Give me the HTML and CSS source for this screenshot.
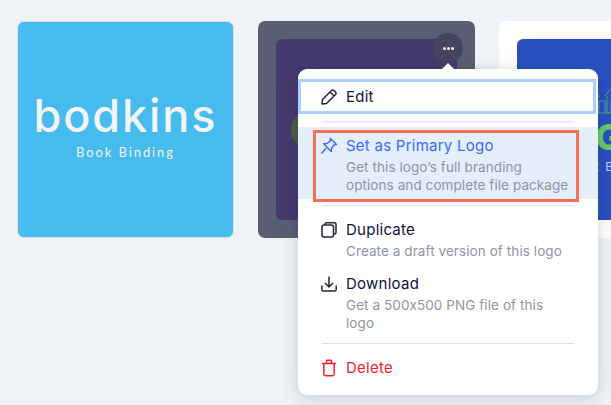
FILE: index.html
```html
<!DOCTYPE html>
<html lang="en">
<head>
<meta charset="utf-8">
<title>Logos</title>
<link rel="stylesheet" href="styles.css">
</head>
<body>
<main class="cards">
  <article class="card card-sky">
    <div class="sky-name">bodkins</div>
    <div class="sky-tag">Book Binding</div>
  </article>
  <article class="card card-slate">
    <div class="art art-purple"><span class="green-disc"></span></div>
    <button class="more" aria-label="More"><span></span><span></span><span></span></button>
  </article>
  <article class="card card-white">
    <div class="art art-blue">
      <svg class="house" width="40" height="30" viewBox="0 0 40 30" fill="none" stroke="#4fa58e" stroke-width="1"><path d="M0 14 8 8 13 13M6 10V29M12 29V17H18V29M18 12 27 1 36 12M20 12V29M24 29V18H30V29M26 5V11M30 5V11M0 29H38"/></svg>
      <span class="blue-g">G</span>
      <span class="blue-sub">t B</span>
    </div>
  </article>
</main>

<nav class="menu">
  <div class="item item-focus">
    <svg class="icon" viewBox="0 0 18 18" fill="none" stroke="#20243c" stroke-width="1.5" stroke-linejoin="round"><path d="M2 16 2.500 11.500 11.500 2.500A1.600 1.600 0 0 1 14 2.500L15.500 4A1.600 1.600 0 0 1 15.500 6.500L6.500 15.500Z M10 4 14 8"/></svg>
    <div class="title">Edit</div>
  </div>
  <hr class="rule rule-a">
  <div class="item item-primary">
    <svg class="icon icon-top" viewBox="0 0 18 18" fill="none" stroke="#3a68ff" stroke-width="1.4" stroke-linejoin="round"><path d="M1.500 16.500 6 11.500M10.500 1.500 16.500 7.500 13.800 8 11.500 11.500 11.300 14.500 3.500 6.800 7 6.500 10.200 4Z"/></svg>
    <div class="copy">
      <div class="title title-primary">Set as Primary Logo</div>
      <div class="desc">Get this logo’s full branding<br>options and complete file package</div>
    </div>
    <span class="highlight"></span>
  </div>
  <hr class="rule rule-b">
  <div class="item item-dup">
    <svg class="icon icon-top" viewBox="0 0 18 18" fill="none" stroke="#20243c" stroke-width="1.5" stroke-linejoin="round"><path d="M5 4V3.200A1.500 1.500 0 0 1 6.500 1.700H14.500A1.500 1.500 0 0 1 16 3.200V11.500A1.500 1.500 0 0 1 14.500 13H13.500"/><rect x="2" y="4" width="11.500" height="12" rx="2"/></svg>
    <div class="copy">
      <div class="title">Duplicate</div>
      <div class="desc">Create a draft version of this logo</div>
    </div>
  </div>
  <div class="item item-down">
    <svg class="icon icon-top" viewBox="0 0 18 18" fill="none" stroke="#20243c" stroke-width="1.5" stroke-linejoin="round"><path d="M9 1.500V12M5 8 9 12 13 8M1.800 10.500V14.500A1.500 1.500 0 0 0 3.300 16H14.700A1.500 1.500 0 0 0 16.200 14.500V10.500"/></svg>
    <div class="copy">
      <div class="title">Download</div>
      <div class="desc desc-narrow">Get a 500x500 PNG file of this logo</div>
    </div>
  </div>
  <hr class="rule rule-c">
  <div class="item item-delete">
    <svg class="icon" viewBox="0 0 18 18" fill="none" stroke="#f5222d" stroke-width="1.5" stroke-linejoin="round"><path d="M2 4.500H16M6.500 4.500V2A.8.8 0 0 1 7.300 1.300H10.700A.8.8 0 0 1 11.500 2V4.500M3.800 4.500V15A1.800 1.800 0 0 0 5.600 16.800H12.400A1.800 1.800 0 0 0 14.200 15V4.500"/></svg>
    <div class="title title-delete">Delete</div>
  </div>
</nav>
</body>
</html>
```

FILE: styles.css
```css
* { box-sizing: border-box; }

html, body {
  margin: 0;
  height: 100%;
}

body {
  background: #eff3f7;
  font-family: "Inter", "Noto Sans", sans-serif;
  font-feature-settings: "calt" 0;
  overflow: hidden;
  position: relative;
  width: 611px;
  height: 405px;
}

.cards {
  display: flex;
  gap: 24px;
  padding: 21px 0 0 17px;
  width: 800px;
}

.card {
  flex: 0 0 217px;
  height: 217px;
  border-radius: 7px;
  position: relative;
  padding: 18px;
}

.card-sky {
  background: #47baee;
  border: 1px solid #d9e3ec;
  display: flex;
  flex-direction: column;
  align-items: center;
  justify-content: center;
  padding: 0 0 4px;
  color: #f3f4f6;
}

.sky-name {
  font-family: "Inter", sans-serif;
  font-size: 45px;
  font-weight: 500;
  line-height: 42px;
  letter-spacing: 1.9px;
}

.sky-tag {
  font-family: "Lato", sans-serif;
  font-size: 13px;
  line-height: 16px;
  margin-top: 7px;
  letter-spacing: 1.9px;
}

.card-slate { background: #5a5e72; }
.card-white { background: #ffffff; }

.art {
  height: 181px;
  border-radius: 6px;
  position: relative;
  overflow: hidden;
}

.art-purple { background: #453a6d; }
.art-blue { background: #2a50c0; }

.green-disc {
  position: absolute;
  left: 15px;
  top: 72px;
  width: 38px;
  height: 38px;
  border-radius: 50%;
  background: #4e5c4c;
}

.more {
  position: absolute;
  left: 175px;
  top: 12px;
  width: 30px;
  height: 30px;
  border: 0;
  border-radius: 50%;
  background: #46445f;
  display: flex;
  align-items: center;
  justify-content: center;
  gap: 1px;
  padding: 0;
}

.more span {
  width: 3px;
  height: 3px;
  border-radius: 50%;
  background: #eef0f6;
}

.house {
  position: absolute;
  left: 70px;
  top: 45px;
}

.blue-g {
  position: absolute;
  left: 78px;
  top: 78px;
  font-size: 36px;
  line-height: 40px;
  font-weight: 800;
  color: #62cd63;
}

.blue-sub {
  position: absolute;
  left: 78px;
  top: 120px;
  font-size: 12px;
  line-height: 16px;
  letter-spacing: 1.5px;
  color: #c4d1f2;
}

.menu {
  position: absolute;
  left: 298px;
  top: 69px;
  width: 300px;
  height: 326px;
  background: #ffffff;
  border-radius: 9px;
  padding-top: 10px;
  box-shadow: 0 6px 24px rgba(22, 45, 61, 0.14), 0 0 6px rgba(22, 45, 61, 0.08);
}

.menu::before {
  content: "";
  position: absolute;
  left: 144px;
  top: -6px;
  border-left: 6px solid transparent;
  border-right: 6px solid transparent;
  border-bottom: 6px solid #ffffff;
}

.item {
  display: flex;
  align-items: flex-start;
  gap: 8px;
  padding-left: 22px;
  position: relative;
}

.icon {
  flex: 0 0 18px;
  width: 18px;
  height: 18px;
}

.icon-top { margin-top: 1px; }

.title {
  font-size: 15px;
  line-height: 20px;
  color: #0b1340;
  letter-spacing: 0.25px;
}

.title-primary { color: #3a68ff; }
.title-delete { color: #f5222d; }

.desc {
  font-size: 13.5px;
  line-height: 18px;
  letter-spacing: 0.08px;
  color: #8f93a8;
  margin-top: 2px;
  width: 232px;
}

.desc-narrow { width: 210px; }

.item-focus {
  height: 35px;
  width: 298px;
  border: 3px solid #a8d0fb;
  padding-left: 19px;
  padding-top: 1px;
  align-items: center;
}

.rule {
  border: 0;
  height: 1px;
  background: #dfe1ea;
  margin: 0 24px;
}

.rule-a { margin-top: 7px; }

.item-primary {
  height: 72px;
  margin-top: 5px;
  background: #e4eefd;
  padding-top: 9px;
}

.highlight {
  position: absolute;
  left: 15px;
  top: 3px;
  width: 266px;
  height: 72px;
  border: 3px solid #fd6f52;
}

.rule-b { margin-top: 6px; }

.item-dup { margin-top: 14px; }
.item-down { margin-top: 14px; }

.rule-c { margin-top: 11px; }

.item-delete {
  margin-top: 14px;
  align-items: center;
}
```
